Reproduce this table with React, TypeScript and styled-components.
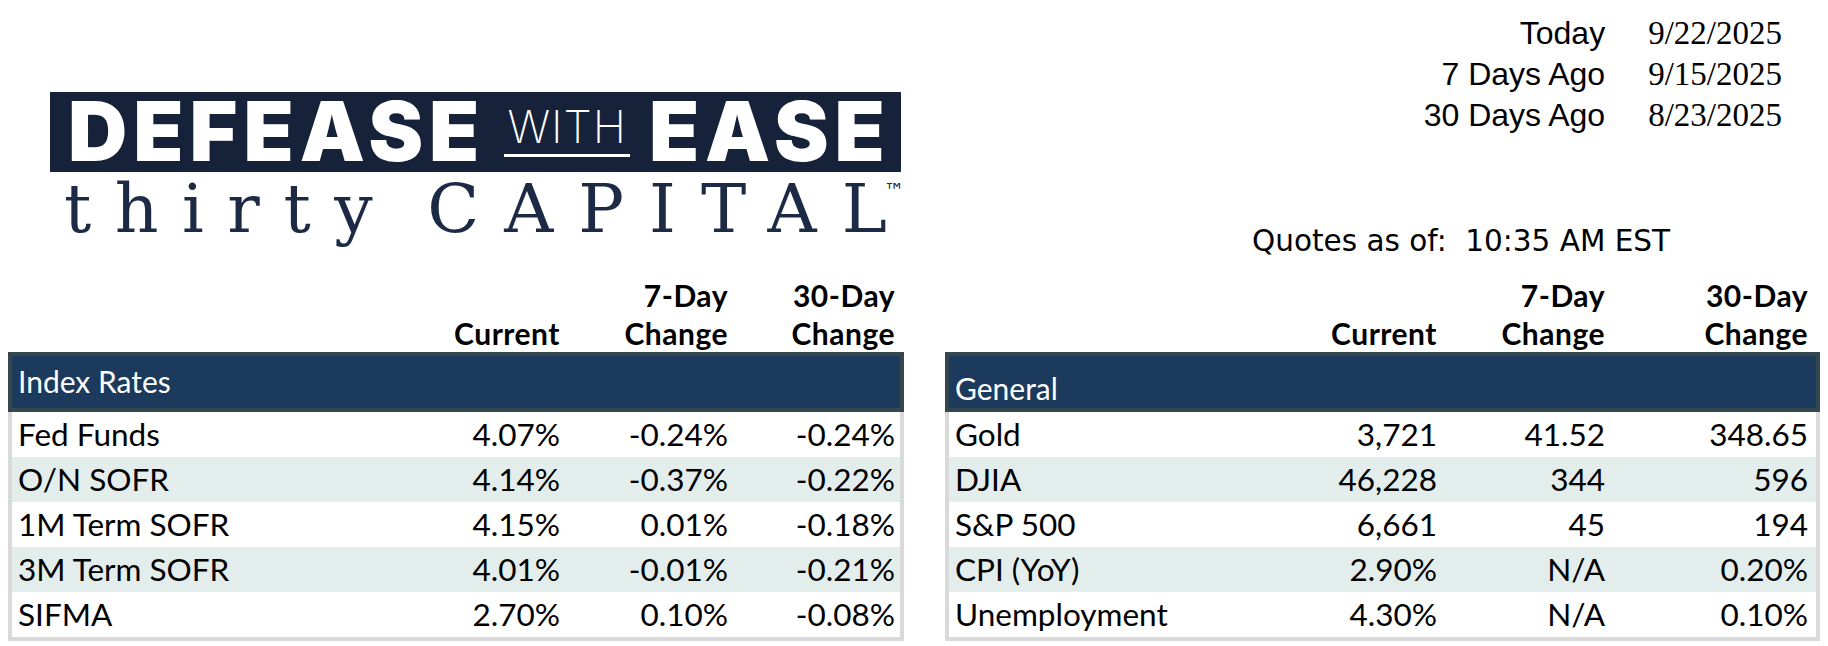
import React from "react";
import styled, { createGlobalStyle } from "styled-components";

const Global = createGlobalStyle`
  html, body { margin: 0; padding: 0; background: #ffffff; }
  body { width: 1828px; height: 646px; overflow: hidden; }
`;

const Page = styled.div`
  display: grid;
  grid-template-columns: 896px 875px;
  grid-template-rows: 276px auto;
  column-gap: 41px;
  padding-left: 8px;
`;

const LogoArea = styled.div`
  display: flex;
  flex-direction: column;
  padding-top: 92px;
  padding-left: 42px;
`;

const LogoBox = styled.div`
  display: flex;
  align-items: center;
  box-sizing: border-box;
  width: 851px;
  height: 80px;
  padding-left: 18px;
  background: #16223a;
`;

const BigWord = styled.span<{ $gap: number }>`
  font-family: Inter, "Liberation Sans", sans-serif;
  font-weight: 900;
  font-size: 82px;
  line-height: 1;
  color: #ffffff;
  letter-spacing: 6px;
  margin-right: ${(p) => p.$gap}px;
`;

const WithGroup = styled.span`
  display: inline-flex;
  flex-direction: column;
  margin-right: 19px;
  margin-bottom: 4px;
`;

const WithText = styled.span`
  font-family: Inter, "Liberation Sans", sans-serif;
  font-weight: 200;
  font-size: 45px;
  line-height: 1;
  color: #ffffff;
  letter-spacing: 1px;
  padding: 0 3px;
`;

const WithRule = styled.span`
  display: block;
  height: 3px;
  margin-top: 5px;
  background: #ffffff;
`;

const ThirtyLine = styled.div`
  display: flex;
  align-items: baseline;
  margin-top: 3px;
  padding-left: 14px;
  color: #1c2a45;
  font-family: "DejaVu Serif", "Liberation Serif", serif;
  font-size: 68px;
  line-height: 1;
`;

const SpacedWord = styled.span<{ $spacing: number; $gap: number }>`
  letter-spacing: ${(p) => p.$spacing}px;
  margin-right: ${(p) => p.$gap}px;
`;

const LastLetter = styled.span`
  letter-spacing: 0;
`;

const Trademark = styled.span`
  align-self: flex-start;
  margin-top: 6px;
  margin-left: -3px;
  font-family: "DejaVu Sans", sans-serif;
  font-size: 21px;
  line-height: 1;
`;

const TopRight = styled.div`
  display: flex;
  flex-direction: column;
  padding-top: 13px;
`;

const DateGrid = styled.div`
  align-self: flex-end;
  display: grid;
  grid-template-columns: auto auto;
  column-gap: 43px;
  align-items: baseline;
  margin-right: 38px;
`;

const DateLabel = styled.div`
  font-family: "Liberation Sans", Arial, sans-serif;
  font-size: 32px;
  line-height: 41px;
  text-align: right;
  color: #000;
`;

const DateValue = styled.div`
  font-family: "Liberation Serif", "Times New Roman", serif;
  font-size: 33px;
  line-height: 41px;
  color: #000;
`;

const Quotes = styled.div`
  margin-top: 88px;
  margin-left: 307px;
  font-family: "DejaVu Sans", Tahoma, sans-serif;
  font-size: 29.5px;
  line-height: 34px;
  white-space: pre;
  color: #000;
`;

const Panel = styled.div`
  display: flex;
  flex-direction: column;
`;

const ColHeads = styled.div<{ $cols: string; $pr: number }>`
  display: grid;
  grid-template-columns: ${(p) => p.$cols};
  padding: 0 ${(p) => p.$pr}px 0 10px;
  font-family: Lato, "Liberation Sans", sans-serif;
  font-weight: 700;
  font-size: 30px;
  letter-spacing: 0.5px;
  line-height: 38px;
  color: #000;
  text-align: right;
`;

const HeadCell = styled.div`
  align-self: end;
`;

const SectionBar = styled.div<{ $padTop: number }>`
  box-sizing: border-box;
  height: 60px;
  border: 4px solid #34474f;
  background: #1b3a5c;
  padding: ${(p) => p.$padTop}px 0 0 6px;
  font-family: Lato, "Liberation Sans", sans-serif;
  font-size: 30px;
  line-height: 30px;
  color: #ffffff;
`;

const Body = styled.div`
  border: 4px solid #d9d9d9;
  border-top: none;
`;

const Row = styled.div<{ $cols: string; $pr: number; $striped: boolean }>`
  display: grid;
  grid-template-columns: ${(p) => p.$cols};
  height: 45px;
  padding: 0 ${(p) => p.$pr - 4}px 0 6px;
  background: ${(p) => (p.$striped ? "#e3edec" : "#ffffff")};
  font-family: Lato, "Liberation Sans", sans-serif;
  font-size: 31.5px;
  line-height: 45px;
  color: #000;
`;

const Cell = styled.div<{ $num?: boolean }>`
  text-align: ${(p) => (p.$num ? "right" : "left")};
  white-space: nowrap;
`;

type TableData = {
  title: string;
  padTop: number;
  cols: string;
  pr: number;
  rows: [string, string, string, string][];
};

const leftTable: TableData = {
  title: "Index Rates",
  padTop: 10,
  cols: "1fr 140px 168px 167px",
  pr: 9,
  rows: [
    ["Fed Funds", "4.07%", "-0.24%", "-0.24%"],
    ["O/N SOFR", "4.14%", "-0.37%", "-0.22%"],
    ["1M Term SOFR", "4.15%", "0.01%", "-0.18%"],
    ["3M Term SOFR", "4.01%", "-0.01%", "-0.21%"],
    ["SIFMA", "2.70%", "0.10%", "-0.08%"],
  ],
};

const rightTable: TableData = {
  title: "General",
  padTop: 17,
  cols: "1fr 140px 168px 203px",
  pr: 12,
  rows: [
    ["Gold", "3,721", "41.52", "348.65"],
    ["DJIA", "46,228", "344", "596"],
    ["S&P 500", "6,661", "45", "194"],
    ["CPI (YoY)", "2.90%", "N/A", "0.20%"],
    ["Unemployment", "4.30%", "N/A", "0.10%"],
  ],
};

function RateTable({ data }: { data: TableData }) {
  return (
    <Panel>
      <ColHeads $cols={data.cols} $pr={data.pr}>
        <HeadCell />
        <HeadCell>Current</HeadCell>
        <HeadCell>
          7-Day
          <br />
          Change
        </HeadCell>
        <HeadCell>
          30-Day
          <br />
          Change
        </HeadCell>
      </ColHeads>
      <SectionBar $padTop={data.padTop}>{data.title}</SectionBar>
      <Body>
        {data.rows.map((r, i) => (
          <Row key={r[0]} $cols={data.cols} $pr={data.pr} $striped={i % 2 === 1}>
            <Cell>{r[0]}</Cell>
            <Cell $num>{r[1]}</Cell>
            <Cell $num>{r[2]}</Cell>
            <Cell $num>{r[3]}</Cell>
          </Row>
        ))}
      </Body>
    </Panel>
  );
}

export default function App() {
  return (
    <>
      <Global />
      <Page>
        <LogoArea>
          <LogoBox>
            <BigWord $gap={19}>DEFEASE</BigWord>
            <WithGroup>
              <WithText>WITH</WithText>
              <WithRule />
            </WithGroup>
            <BigWord $gap={0}>EASE</BigWord>
          </LogoBox>
          <ThirtyLine>
            <SpacedWord $spacing={23.5} $gap={31}>
              thirty
            </SpacedWord>
            <SpacedWord $spacing={25} $gap={0}>
              CAPITA<LastLetter>L</LastLetter>
            </SpacedWord>
            <Trademark>™</Trademark>
          </ThirtyLine>
        </LogoArea>
        <TopRight>
          <DateGrid>
            <DateLabel>Today</DateLabel>
            <DateValue>9/22/2025</DateValue>
            <DateLabel>7 Days Ago</DateLabel>
            <DateValue>9/15/2025</DateValue>
            <DateLabel>30 Days Ago</DateLabel>
            <DateValue>8/23/2025</DateValue>
          </DateGrid>
          <Quotes>{"Quotes as of:  10:35 AM EST"}</Quotes>
        </TopRight>
        <RateTable data={leftTable} />
        <RateTable data={rightTable} />
      </Page>
    </>
  );
}
